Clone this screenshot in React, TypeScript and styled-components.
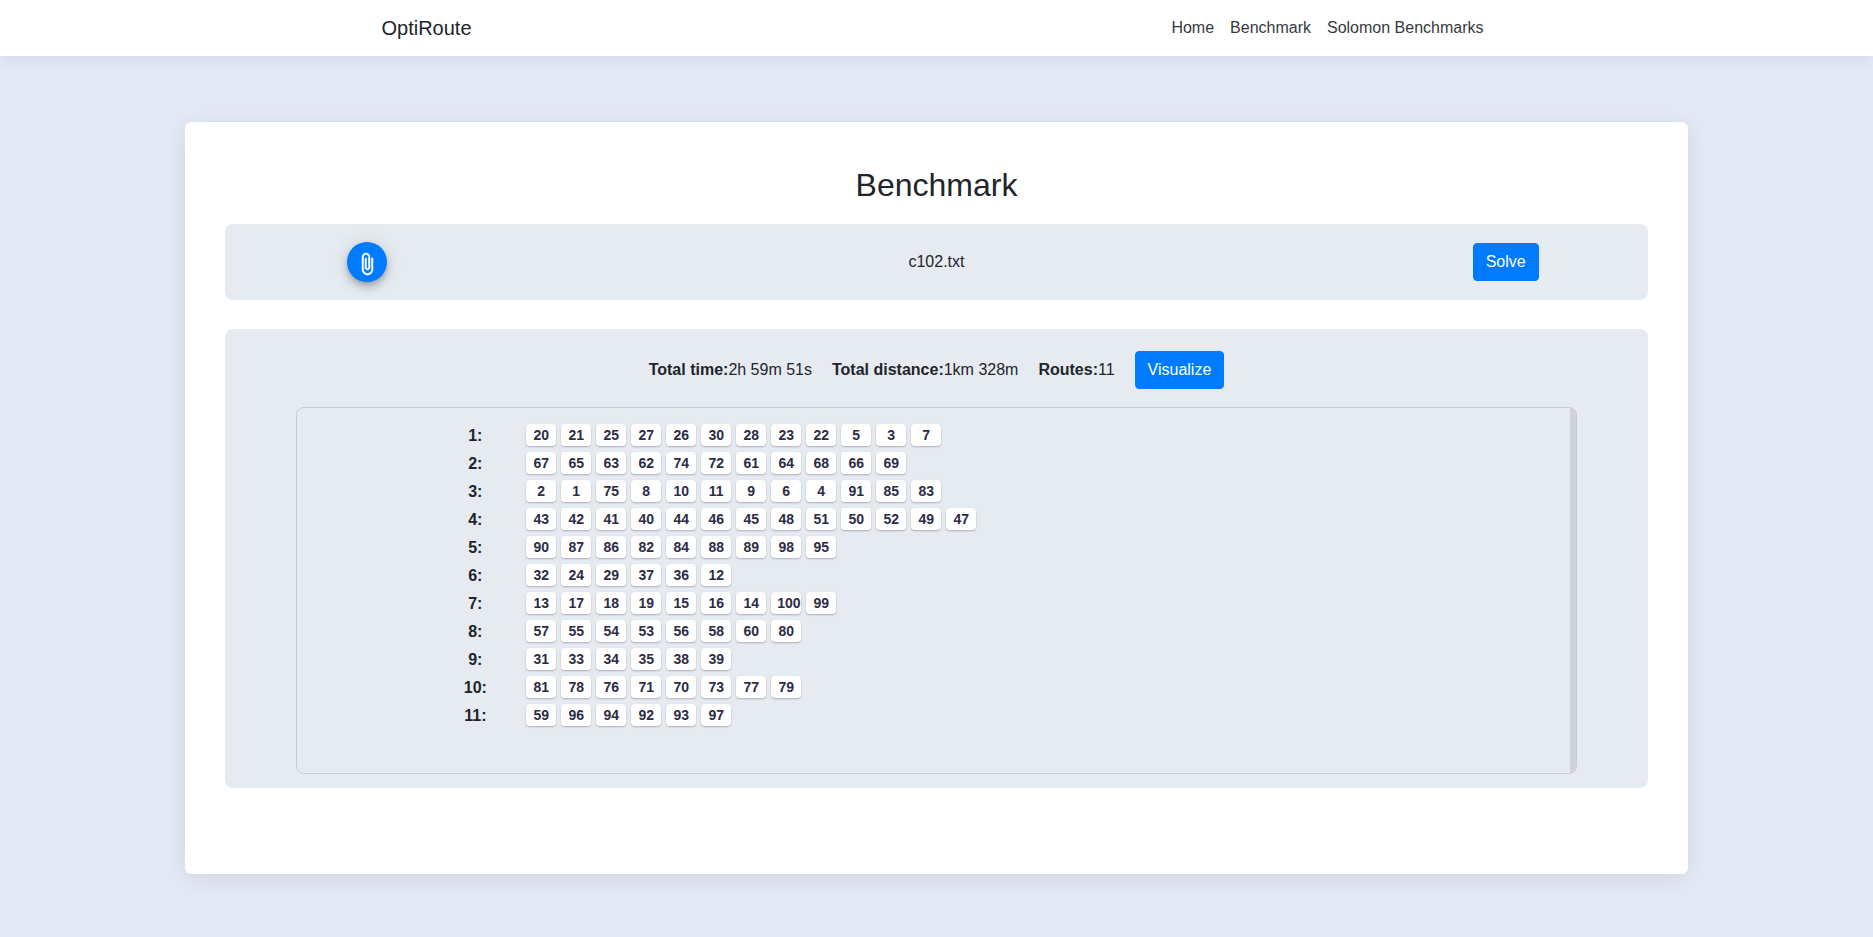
import React from "react";
import styled, { createGlobalStyle } from "styled-components";

const GlobalStyle = createGlobalStyle`
  *, *::before, *::after { box-sizing: border-box; }
  body {
    margin: 0;
    background: #e3e9f5;
    color: #212529;
    font-family: Arial, "Liberation Sans", sans-serif;
    font-size: 16px;
    line-height: 24px;
  }
`;

const Header = styled.header`
  background: #fff;
  box-shadow: 0 4px 14px rgba(0, 0, 0, 0.06);
`;

const HeaderInner = styled.div`
  display: flex;
  align-items: center;
  justify-content: space-between;
  max-width: 1140px;
  min-height: 56px;
  margin: 0 auto;
  padding: 0 15px;
`;

const Brand = styled.a`
  color: #212529;
  font-size: 20px;
  line-height: 30px;
  text-decoration: none;
`;

const Nav = styled.nav`
  display: flex;
`;

const NavLink = styled.a`
  padding: 8px;
  color: #343a40;
  text-decoration: none;
`;

const Card = styled.main`
  margin: 66px 185px 63px;
  padding: 44px 40px 86px;
  border-radius: 6px;
  background: #fff;
  box-shadow: 0 4px 25px rgba(0, 0, 0, 0.09);
`;

const Title = styled.h1`
  margin: 0 0 20px;
  font-size: 32px;
  font-weight: 400;
  line-height: 38px;
  text-align: center;
`;

const Panel = styled.section`
  border-radius: 8px;
  background: #e6ebf2;
`;

const FilePanel = styled(Panel)`
  display: grid;
  grid-template-columns: 1fr 3fr 1fr;
  align-items: center;
  justify-items: center;
  min-height: 76px;
  margin-bottom: 29px;
`;

const AttachButton = styled.button`
  width: 40px;
  height: 40px;
  padding: 10px 8px 6px;
  border: 0;
  border-radius: 50%;
  background: #007bff;
  color: #fff;
  cursor: pointer;
  box-shadow: 0 3px 5px -1px rgba(0, 0, 0, 0.2), 0 6px 10px rgba(0, 0, 0, 0.14),
    0 1px 18px rgba(0, 0, 0, 0.12);

  svg {
    display: block;
    fill: currentColor;
    stroke: currentColor;
    stroke-width: 0.5;
  }
`;

const Button = styled.button`
  padding: 6px 12px;
  border: 1px solid #007bff;
  border-radius: 4px;
  background: #007bff;
  color: #fff;
  font: inherit;
  cursor: pointer;
`;

const ResultPanel = styled(Panel)`
  padding: 22px 0 14px;
`;

const Summary = styled.div`
  display: flex;
  align-items: center;
  justify-content: center;
  gap: 20px;
  margin-bottom: 18px;
`;

const RouteBox = styled.div`
  display: grid;
  grid-template-columns: 1fr 6px;
  width: 90%;
  min-height: 367px;
  margin: 0 auto;
  overflow: hidden;
  border: 1px solid #c6cad5;
  border-radius: 8px;
`;

const ScrollTrack = styled.div`
  background: #ced2db;
`;

const RouteList = styled.ol`
  margin: 0;
  padding: 16px 10% 0;
  list-style: none;
`;

const RouteRow = styled.li`
  display: grid;
  grid-template-columns: 10% 90%;
  align-items: start;
  min-height: 28px;
`;

const RouteLabel = styled.strong`
  text-align: center;
`;

const Stops = styled.div`
  display: flex;
  flex-wrap: wrap;
  gap: 5px;
`;

const Stop = styled.span`
  width: 30px;
  padding: 0 6px;
  border-radius: 4px;
  background: #fff;
  color: #2d2c45;
  font-size: 14px;
  font-weight: 700;
  line-height: 22px;
  text-align: center;
  box-shadow: 0 1px 2px rgba(0, 0, 0, 0.25);
`;

const links = ["Home", "Benchmark", "Solomon Benchmarks"];

const summary = [
  { label: "Total time:", value: "2h 59m 51s" },
  { label: "Total distance:", value: "1km 328m" },
  { label: "Routes:", value: "11" },
];

const routes = [
  [20, 21, 25, 27, 26, 30, 28, 23, 22, 5, 3, 7],
  [67, 65, 63, 62, 74, 72, 61, 64, 68, 66, 69],
  [2, 1, 75, 8, 10, 11, 9, 6, 4, 91, 85, 83],
  [43, 42, 41, 40, 44, 46, 45, 48, 51, 50, 52, 49, 47],
  [90, 87, 86, 82, 84, 88, 89, 98, 95],
  [32, 24, 29, 37, 36, 12],
  [13, 17, 18, 19, 15, 16, 14, 100, 99],
  [57, 55, 54, 53, 56, 58, 60, 80],
  [31, 33, 34, 35, 38, 39],
  [81, 78, 76, 71, 70, 73, 77, 79],
  [59, 96, 94, 92, 93, 97],
];

function PaperclipIcon() {
  return (
    <svg width="24" height="24" viewBox="0 0 24 24" aria-hidden="true">
      <path d="M16.5 6v11.5c0 2.21-1.79 4-4 4s-4-1.79-4-4V5c0-1.38 1.12-2.5 2.5-2.5s2.5 1.12 2.5 2.5v10.5c0 .55-.45 1-1 1s-1-.45-1-1V6H10v9.5c0 1.38 1.12 2.5 2.5 2.5s2.5-1.12 2.5-2.5V5c0-2.21-1.79-4-4-4S7 2.79 7 5v12.5c0 3.04 2.46 5.5 5.5 5.5s5.5-2.46 5.5-5.5V6h-1.5z" />
    </svg>
  );
}

export default function App() {
  return (
    <>
      <GlobalStyle />
      <Header>
        <HeaderInner>
          <Brand href="#">OptiRoute</Brand>
          <Nav>
            {links.map((link) => (
              <NavLink key={link} href="#">
                {link}
              </NavLink>
            ))}
          </Nav>
        </HeaderInner>
      </Header>
      <Card>
        <Title>Benchmark</Title>
        <FilePanel>
          <AttachButton type="button" aria-label="Attach file">
            <PaperclipIcon />
          </AttachButton>
          <span>c102.txt</span>
          <Button type="button">Solve</Button>
        </FilePanel>
        <ResultPanel>
          <Summary>
            {summary.map(({ label, value }) => (
              <span key={label}>
                <strong>{label}</strong>
                {value}
              </span>
            ))}
            <Button type="button">Visualize</Button>
          </Summary>
          <RouteBox>
            <RouteList>
              {routes.map((stops, index) => (
                <RouteRow key={index}>
                  <RouteLabel>{index + 1}:</RouteLabel>
                  <Stops>
                    {stops.map((stop) => (
                      <Stop key={stop}>{stop}</Stop>
                    ))}
                  </Stops>
                </RouteRow>
              ))}
            </RouteList>
            <ScrollTrack />
          </RouteBox>
        </ResultPanel>
      </Card>
    </>
  );
}
